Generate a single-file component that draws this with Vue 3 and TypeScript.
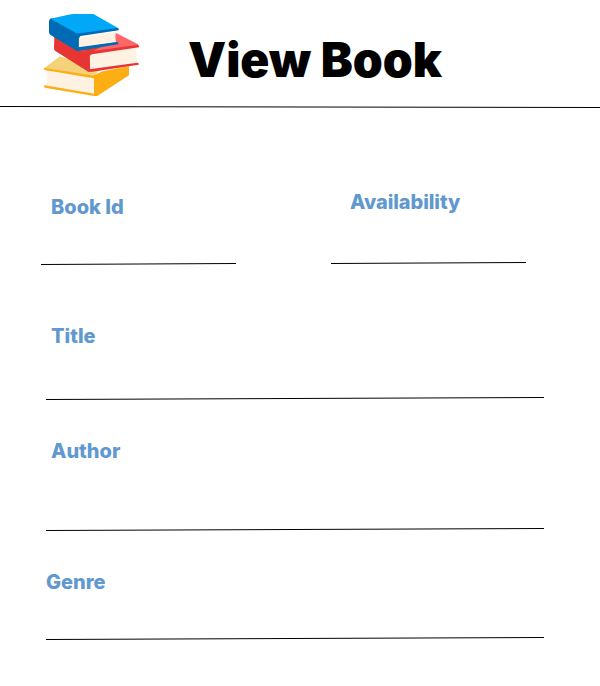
<script setup lang="ts">
interface Field {
  key: string
  label: string
}

const shortFields: Field[] = [
  { key: 'book-id', label: 'Book Id' },
  { key: 'availability', label: 'Availability' },
]

const longFields: Field[] = [
  { key: 'title', label: 'Title' },
  { key: 'author', label: 'Author' },
  { key: 'genre', label: 'Genre' },
]
</script>

<template>
  <main class="page">
    <header class="header">
      <svg class="logo" viewBox="0 0 336 300" aria-hidden="true">
        <!-- yellow book -->
        <path fill="#f4d27a" d="M25 186 L72 151 L190 190 L176 211 Z" />
        <path fill="#fcae12" d="M174 208 L200 196 L279 181 V208 L185 269 Q178 272 173 266 Z" />
        <path fill="#fff2e2" d="M31 191 L174 217 V265 L31 240 Q37 216 31 191 Z" />
        <path fill="#fcae12" d="M24 185 L176 209 Q183 211 182 218 L25 192 Z" />
        <path fill="#fcae12" d="M26 238 L174 263 L185 269 Q180 271 174 270 L26 245 Q22 241 26 238 Z" />
        <!-- red book -->
        <path fill="#e63532" d="M55 91 Q55 84 61 86 L160 134 L164 197 Q158 199 152 194 L58 135 Q54 132 54 125 Z" />
        <path fill="#ff6669" d="M130 131 L239 80 L306 115 L306 120 L162 141 Z" />
        <path fill="#e63532" d="M128 128 L212 114 L160 141 Z" />
        <path fill="#fff2e2" d="M161 143 L302 123 Q299 147 303 171 L162 192 Z" />
        <path fill="#e63532" d="M155 137 L304 117 Q311 117 309 124 L168 145 Q162 146 161 153 V198 L153 193 Z" />
        <path fill="#e63532" d="M160 190 L304 170 Q310 171 308 176 L164 198 Z" />
        <!-- blue book -->
        <path fill="#006bb5" d="M39 45 Q40 38 48 37 L132 79 L130 134 Q124 136 118 132 L44 87 Q39 84 39 78 Z" />
        <path fill="#00a8f7" d="M43 38 L97 26 Q105 24 114 24 H172 L246 66 V70 L130 86 Z" />
        <path fill="#fff2e2" d="M128 95 L240 77 Q236 93 240 109 L128 126 Z" />
        <path fill="#006bb5" d="M117 84 L243 66 Q250 66 248 73 L134 90 Q128 91 128 98 V134 L118 131 Z" />
        <path fill="#006bb5" d="M127 124 L242 108 Q249 108 247 115 L130 134 Z" />
      </svg>
      <h1 class="heading">View Book</h1>
    </header>
    <svg class="header-rule" viewBox="0 0 600 2" aria-hidden="true">
      <line x1="0" y1="0.5" x2="600" y2="1.5" stroke="#000" />
    </svg>

    <section class="short-fields">
      <div v-for="field in shortFields" :key="field.key" class="field" :class="field.key">
        <span class="label">{{ field.label }}</span>
        <svg class="short-rule" viewBox="0 0 195 2" aria-hidden="true">
          <line x1="0" y1="1.5" x2="195" y2="0.5" stroke="#000" />
        </svg>
      </div>
    </section>

    <section class="long-fields">
      <div v-for="field in longFields" :key="field.key" class="field" :class="field.key">
        <span class="label">{{ field.label }}</span>
        <svg class="long-rule" viewBox="0 0 498 3" aria-hidden="true">
          <line x1="0" y1="2.5" x2="498" y2="0.5" stroke="#000" />
        </svg>
      </div>
    </section>
  </main>
</template>

<style>
body {
  margin: 0;
  background: #fff;
}
</style>

<style scoped>
.page {
  box-sizing: border-box;
  width: 600px;
  height: 686px;
  overflow: hidden;
  background: #fff;
  font-family: Inter, "Liberation Sans", sans-serif;
}

.header {
  display: flex;
  align-items: flex-start;
  box-sizing: border-box;
  height: 106px;
  padding: 6px 0 0 36px;
}

.logo {
  flex: none;
  width: 112px;
  height: 100px;
}

.heading {
  margin: 25px 0 0 40px;
  font-size: 48px;
  font-weight: 900;
  line-height: 58px;
  white-space: nowrap;
  color: #000;
}

.header-rule {
  display: block;
  width: 600px;
  height: 2px;
}

.short-fields {
  display: grid;
  grid-template-columns: 195px 195px;
  column-gap: 95px;
  padding: 82px 0 0 41px;
}

.long-fields {
  padding-left: 46px;
}

.field {
  display: flex;
  flex-direction: column;
  align-items: flex-start;
}

.label {
  font-size: 20px;
  font-weight: 800;
  line-height: 24px;
  white-space: nowrap;
  color: #6199cf;
}

.short-rule {
  display: block;
  width: 195px;
  height: 2px;
}

.long-rule {
  display: block;
  width: 498px;
  height: 3px;
}

.book-id {
  padding-top: 5px;
}

.book-id .label {
  margin: 0 0 44px 10px;
}

.availability .label {
  margin: 0 0 48px 19px;
  letter-spacing: -0.08px;
}

.title {
  padding-top: 59px;
}

.title .label {
  margin: 0 0 49px 5px;
}

.author {
  padding-top: 39px;
}

.author .label {
  margin: 0 0 65px 5px;
}

.genre {
  padding-top: 39px;
}

.genre .label {
  margin-bottom: 43px;
}
</style>
